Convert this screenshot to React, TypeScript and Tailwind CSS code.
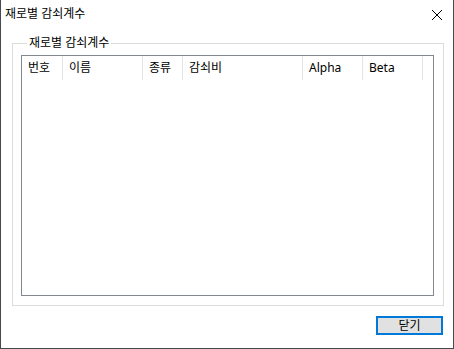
import React from 'react';

const columns = [
  { label: '번호', width: 'w-[41px]' },
  { label: '이름', width: 'w-[80px]' },
  { label: '종류', width: 'w-[40px]' },
  { label: '감쇠비', width: 'w-[120px]' },
  { label: 'Alpha', width: 'w-[60px]' },
  { label: 'Beta', width: 'w-[60px]' },
];

const App = () => {
  return (
    <div
      className="w-[454px] h-[349px] bg-white border-l border-r border-b border-[#434a52] flex flex-col text-[12px] text-black"
      style={{ fontFamily: '"Noto Sans", "Noto Sans CJK KR", sans-serif' }}
    >
      {/* Title bar */}
      <div className="h-[28px] flex items-center justify-between pl-[4px] pr-[10px]">
        <span className="leading-[16px]">재로별 감쇠계수</span>
        <svg width="12" height="12" viewBox="0 0 12 12" className="mt-[1px]">
          <path d="M1 1 L11 11 M11 1 L1 11" stroke="#000" strokeWidth="1" />
        </svg>
      </div>

      {/* Group box */}
      <fieldset className="mt-[7px] ml-[11px] mr-[9px] border border-[#dcdcdc] pl-[8px] pr-[9px] pt-[4px] pb-[9px]">
        <legend className="ml-[6px] px-[2px] leading-[16px]">재로별 감쇠계수</legend>
        <div className="h-[241px] border border-[#828790] flex flex-col">
          <div className="h-[24px] flex items-stretch">
            {columns.map((c) => (
              <div
                key={c.label}
                className={`${c.width} border-r border-[#e5e5e5] flex items-center pl-[6px] shrink-0`}
              >
                {c.label}
              </div>
            ))}
          </div>
        </div>
      </fieldset>

      {/* Footer */}
      <div className="flex justify-end mt-[10px] mr-[10px]">
        <button className="w-[67px] h-[19px] bg-[#e1e1e1] border-2 border-[#0078d7] flex items-center justify-center leading-none">
          닫기
        </button>
      </div>
    </div>
  );
};

export default App;
